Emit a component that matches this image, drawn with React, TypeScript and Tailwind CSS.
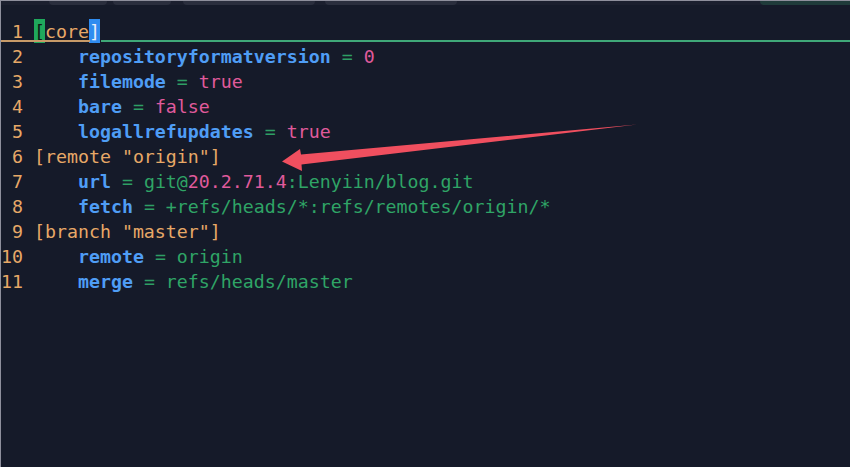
const mono = { fontFamily: '"DejaVu Sans Mono", "Liberation Mono", monospace' };

type Seg = { t: string; c: string };

const K = 'text-[#4f9df5] font-bold';
const EQ = 'text-[#2e9e64]';
const STR = 'text-[#2fa466]';
const NUM = 'text-[#e05a9c]';
const SEC = 'text-[#e7a867]';

const lines: Seg[][] = [
  [],
  [{ t: '    ', c: '' }, { t: 'repositoryformatversion', c: K }, { t: ' = ', c: EQ }, { t: '0', c: NUM }],
  [{ t: '    ', c: '' }, { t: 'filemode', c: K }, { t: ' = ', c: EQ }, { t: 'true', c: NUM }],
  [{ t: '    ', c: '' }, { t: 'bare', c: K }, { t: ' = ', c: EQ }, { t: 'false', c: NUM }],
  [{ t: '    ', c: '' }, { t: 'logallrefupdates', c: K }, { t: ' = ', c: EQ }, { t: 'true', c: NUM }],
  [{ t: '[remote "origin"]', c: SEC }],
  [
    { t: '    ', c: '' },
    { t: 'url', c: K },
    { t: ' = ', c: EQ },
    { t: 'git@', c: STR },
    { t: '20.2.71.4', c: NUM },
    { t: ':Lenyiin/blog.git', c: STR },
  ],
  [{ t: '    ', c: '' }, { t: 'fetch', c: K }, { t: ' = ', c: EQ }, { t: '+refs/heads/*:refs/remotes/origin/*', c: STR }],
  [{ t: '[branch "master"]', c: SEC }],
  [{ t: '    ', c: '' }, { t: 'remote', c: K }, { t: ' = ', c: EQ }, { t: 'origin', c: STR }],
  [{ t: '    ', c: '' }, { t: 'merge', c: K }, { t: ' = ', c: EQ }, { t: 'refs/heads/master', c: STR }],
];

function TabStrip() {
  return (
    <div className="flex h-[5px] border-t border-[#8e8f9c] bg-[#1b1f2e]">
      <div className="w-[48px]" />
      <div className="w-[58px] rounded-b-[4px] bg-[#2a2e3d]" />
      <div className="w-[6px]" />
      <div className="w-[58px] rounded-b-[4px] bg-[#2a2e3d]" />
      <div className="w-[12px]" />
      <div className="w-[132px] rounded-b-[4px] bg-[#2a2e3d]" />
      <div className="w-[10px]" />
      <div className="w-[132px] rounded-b-[4px] bg-[#2a2e3d]" />
      <div className="flex-1" />
      <div className="w-[90px] rounded-bl-[5px] bg-[#1f3b3a]" />
    </div>
  );
}

function Arrow() {
  return (
    <svg className="absolute left-0 top-0" width="850" height="467" viewBox="0 0 850 467">
      <path d="M636 124.5 L300 154.5 L299 149 L281 161.5 L301 171 L300.5 164.5 Z" fill="#f04f5f" />
    </svg>
  );
}

export default function App() {
  return (
    <div className="relative h-[467px] w-[850px] overflow-hidden bg-[#151a29] border-l border-[#8e8f9c]" style={mono}>
      <TabStrip />
      <div className="pt-[14px] text-[18.25px] leading-[25px] whitespace-pre">
        {/* line 1 with cursor line */}
        <div className="relative flex h-[25px]">
          <span className="w-[33px] text-right pr-[11px] text-[#e7a867]">1</span>
          <span className="h-[24px] bg-[#1fa85c] text-[#0f1a14]">[</span>
          <span className={SEC}>core</span>
          <span className="h-[24px] bg-[#2f8cf0] text-[#e8eefa]">]</span>
          <div className="absolute left-0 top-[21px] h-[1.5px] w-[89px] bg-[#c79a68]" />
          <div className="absolute left-[100px] right-0 top-[21px] h-[1.5px] bg-[#3fa878]" />
        </div>
        {lines.slice(1).map((segs, i) => (
          <div key={i} className="flex h-[25px]">
            <span className="w-[33px] text-right pr-[11px] text-[#e7a867]">{i + 2}</span>
            <span>
              {segs.map((s, j) => (
                <span key={j} className={s.c}>
                  {s.t}
                </span>
              ))}
            </span>
          </div>
        ))}
      </div>
      <Arrow />
    </div>
  );
}
